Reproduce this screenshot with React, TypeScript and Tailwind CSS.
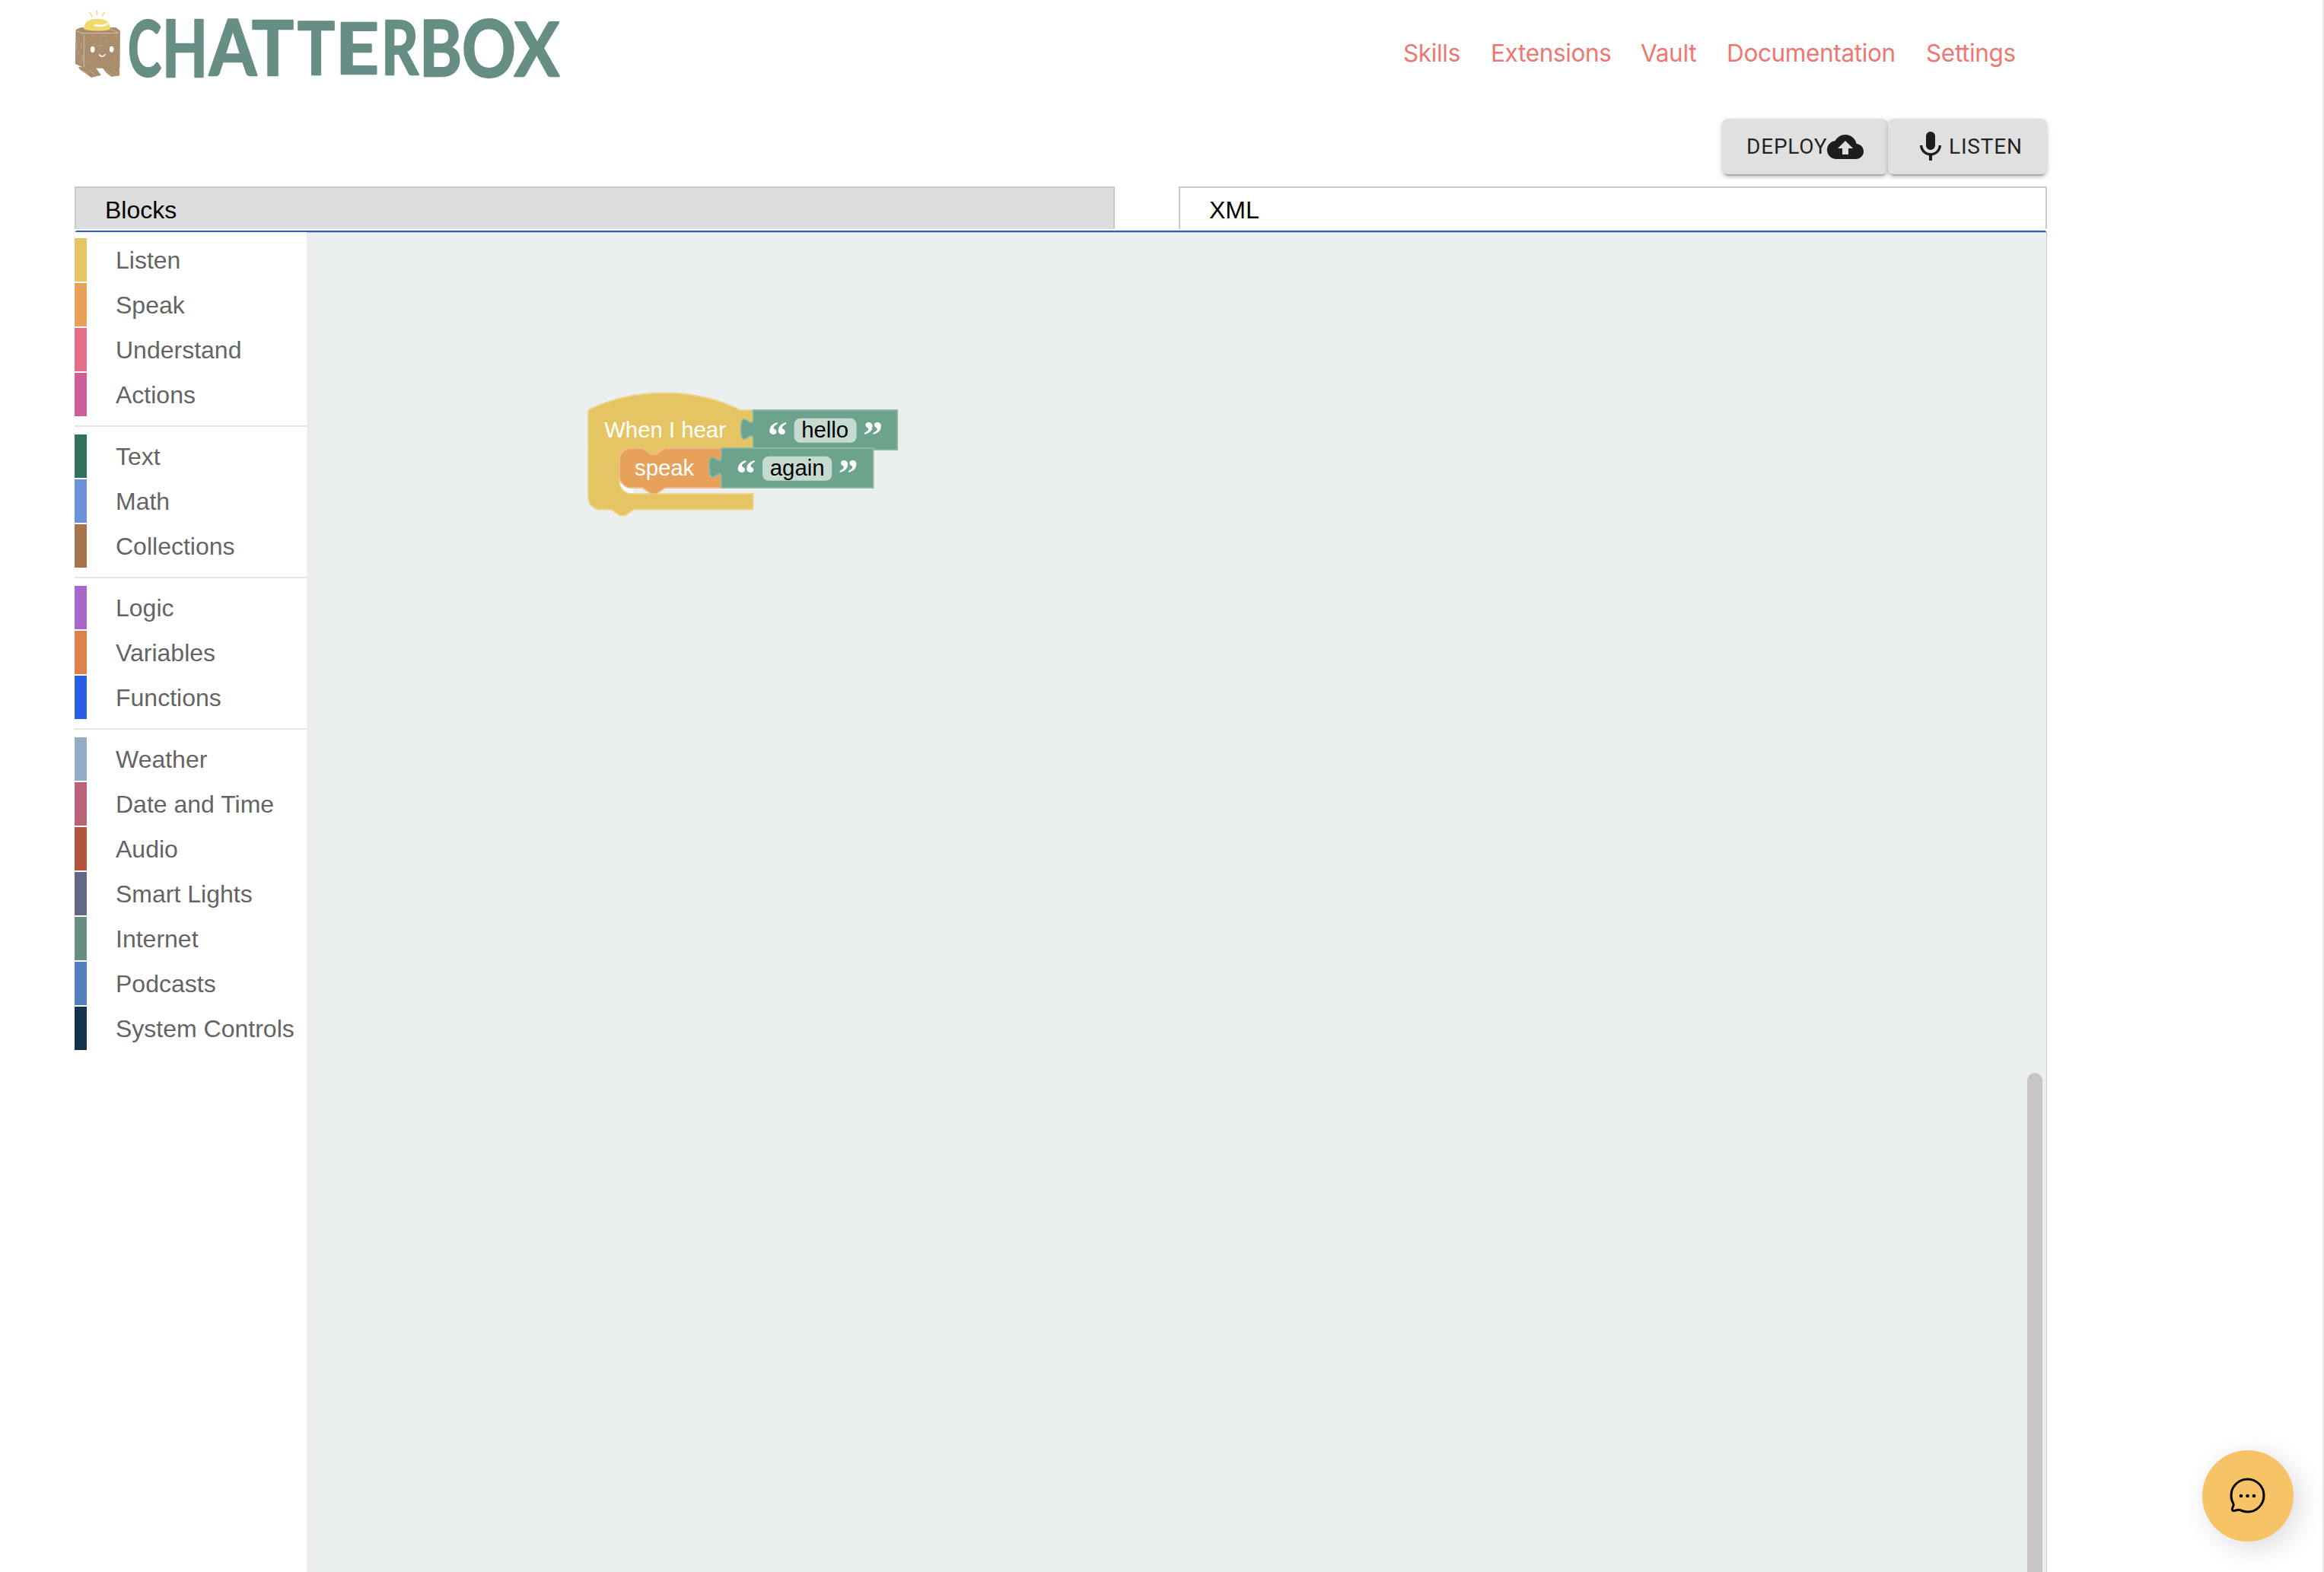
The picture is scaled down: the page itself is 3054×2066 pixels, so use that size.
import React from "react";

type Category = { name: string; bar: string };

const groups: Category[][] = [
  [
    { name: "Listen", bar: "bg-[#e5c563]" },
    { name: "Speak", bar: "bg-[#e8a15b]" },
    { name: "Understand", bar: "bg-[#e37088]" },
    { name: "Actions", bar: "bg-[#cd5c99]" },
  ],
  [
    { name: "Text", bar: "bg-[#31725f]" },
    { name: "Math", bar: "bg-[#6b92d6]" },
    { name: "Collections", bar: "bg-[#a5744c]" },
  ],
  [
    { name: "Logic", bar: "bg-[#a866c8]" },
    { name: "Variables", bar: "bg-[#de7f4d]" },
    { name: "Functions", bar: "bg-[#2b5ce5]" },
  ],
  [
    { name: "Weather", bar: "bg-[#92adc7]" },
    { name: "Date and Time", bar: "bg-[#b86378]" },
    { name: "Audio", bar: "bg-[#b3543b]" },
    { name: "Smart Lights", bar: "bg-[#626786]" },
    { name: "Internet", bar: "bg-[#678e84]" },
    { name: "Podcasts", bar: "bg-[#5081bc]" },
    { name: "System Controls", bar: "bg-[#14324e]" },
  ],
];

const links = [
  { name: "Skills", w: "w-[115px]" },
  { name: "Extensions", w: "w-[197px]" },
  { name: "Vault", w: "w-[113px]" },
  { name: "Documentation", w: "w-[262px]" },
  { name: "Settings", w: "w-[122px]" },
];

// Wordmark letters: left edge, baseline, advance and size of each
const letters = [
  { ch: "C", x: 168, y: 100, w: 44, size: 101 },
  { ch: "H", x: 213, y: 101, w: 60, size: 104 },
  { ch: "A", x: 275, y: 99, w: 62, size: 101 },
  { ch: "T", x: 331, y: 99, w: 55, size: 100 },
  { ch: "T", x: 391, y: 98, w: 49, size: 96 },
  { ch: "E", x: 441, y: 96.5, w: 57, size: 92 },
  { ch: "R", x: 501, y: 98, w: 49, size: 98 },
  { ch: "B", x: 551, y: 100, w: 56, size: 101 },
  { ch: "O", x: 607, y: 101, w: 71, size: 104 },
  { ch: "X", x: 676, y: 100, w: 59, size: 98 },
];

function Mascot() {
  return (
    <>
      <path d="M60 118l18-8 140 0 14 12-1 145-136 1-37-17z" fill="#a98d6c" stroke="#a98d6c" strokeWidth="3" strokeLinejoin="round" />
      <path d="M70 264l66 2 22 30-38 9-20-14-26-18zM162 264l68 2 1 32-32 4-22-18z" fill="#a98d6c" stroke="#a98d6c" strokeWidth="1" />
      <path
        d="M80 131h146M91 136v128M64 122l22 10M198 116l26 13"
        stroke="#d3c4af"
        strokeWidth="3"
        fill="none"
      />
      <path
        d="M70 150l5 10M66 200l7 18M79 168l2 26M71 236l10 12M65 176l4 8M84 214l1 26M61 156v44M120 140l12 2M150 160l10-3M168 142l14 2M128 178l8-6M180 168l8-4M114 152l5 4M214 142l7 5M106 246l7 4M208 226l8 8M84 276l22 14M112 276l22 20M178 276l22 18M206 274l16 18M146 182l16-2"
        stroke="#c9b89f"
        strokeWidth="2"
        fill="none"
      />
      <ellipse cx="125" cy="195" rx="8.5" ry="12" fill="#fff" />
      <ellipse cx="200" cy="194" rx="8.5" ry="12" fill="#fff" />
      <path d="M152 216q10 14 22-1" stroke="#fff" strokeWidth="5" fill="none" strokeLinecap="round" />
      <path d="M90 114c4-24 14-34 34-38 20-3 42-2 56 6 10 8 13 20 15 34-30 8-80 8-105-2z" fill="#f0da6c" />
      <path d="M134 99c12 4 38 4 47-5" stroke="#fff" strokeWidth="8" fill="none" strokeLinecap="round" />
      <path d="M114 49l9 15M142 43l1 15M172 49l-8 13" stroke="#f0da6c" strokeWidth="5" fill="none" strokeLinecap="round" />
    </>
  );
}

function Logo() {
  return (
    <svg width="760" height="120" viewBox="0 0 760 120" className="block shrink-0">
      <g transform="translate(80 0) scale(0.33333)">
        <Mascot />
      </g>
      <text fill="#678e84" stroke="#678e84" strokeWidth="2.4" strokeLinejoin="round" className="font-[Lato,sans-serif] font-bold">
        {letters.map((l, i) => (
          <tspan key={i} x={l.x} y={l.y} fontSize={l.size} textLength={l.w} lengthAdjust="spacingAndGlyphs">
            {l.ch}
          </tspan>
        ))}
      </text>
    </svg>
  );
}

function ValueBlock({ x, y, w, pill, word, wordX }: { x: number; y: number; w: number; pill: number; word: string; wordX: number }) {
  return (
    <g transform={`translate(${x} ${y})`}>
      <path
        d={`M0,0 H${w} V26 H0 V20 c0,-10 -8,8 -8,-7.5 s8,2.5 8,-7.5 z`}
        fill="#6da38c"
        stroke="#8cb9a6"
        strokeWidth="0.9"
      />
      <text x="9.6" y="25.3" fontSize="26" fill="#fff" className="font-['Liberation_Serif',serif] font-bold">“</text>
      <rect x="27" y="5.4" width={pill} height="16" rx="4" fill="#c5dad1" />
      <text x={wordX} y="18.2" fontSize="14.67" fill="#000">{word}</text>
      <text x={27 + pill + 4.3} y="25.3" fontSize="26" fill="#fff" className="font-['Liberation_Serif',serif] font-bold">”</text>
    </g>
  );
}

function Blocks() {
  return (
    <svg
      width="440"
      height="180"
      viewBox="0 -15 220 90"
      className="absolute left-[370px] top-[203px] overflow-visible font-['Liberation_Sans',Arial,sans-serif]"
    >
      <path d="M20.3,44 V47 a8,8 0 0 0 8,8 H30 L29,51 L22,44 z" fill="#fff" />
      <path
        d="M0,0 c30,-15 70,-15 100,0 H108.3 V25 H50.5 l-6,4 -3,0 -6,-4 h-7 a8,8 0 0 0 -8,8 V47 a8,8 0 0 0 8,8 H108.3 V65.3 H30 l-6,4 -3,0 -6,-4 H8 a8,8 0 0 1 -8,-8 z"
        fill="#e5c563"
        stroke="#ecd586"
        strokeWidth="0.9"
      />
      <text x="10.6" y="18.2" fontSize="14.67" fill="#fff">When I hear</text>
      <g transform="translate(20.5 25)">
        <path
          d="M0,8 a8,8 0 0 1 8,-8 h7 l6,4 3,0 6,-4 H67 V26 H30 l-6,4 -3,0 -6,-4 H8 a8,8 0 0 1 -8,-8 z"
          fill="#e8a15b"
          stroke="#efb988"
          strokeWidth="0.9"
        />
        <text x="10" y="18.2" fontSize="14.67" fill="#fff">speak</text>
      </g>
      <ValueBlock x={108.3} y={0} w={94.8} pill={41} word="hello" wordX={31.8} />
      <ValueBlock x={87.5} y={25} w={99.8} pill={45.6} word="again" wordX={31.9} />
    </svg>
  );
}

const buttonClass =
  "flex h-[73px] items-center rounded-lg bg-[#e0e0e0] font-[Roboto,sans-serif] text-[28px] leading-none tracking-[0.8px] text-black/87 shadow-[0_6px_2px_-4px_rgba(0,0,0,0.2),0_4px_4px_0_rgba(0,0,0,0.14),0_2px_10px_0_rgba(0,0,0,0.12)]";

export default function App() {
  return (
    <div className="relative flex h-[2066px] w-[3054px] flex-col overflow-hidden border-r-2 border-[#e8e8e8] bg-white font-['Liberation_Sans',Arial,sans-serif] text-[32px]">
      <header className="flex h-[120px] w-[2690px] shrink-0 justify-between">
        <Logo />
        <nav className="mt-[47px] flex w-[846px] font-[Inter,sans-serif] text-[31.5px] leading-[46px] tracking-[-0.35px] text-[#ee7772]">
          {links.map((l) => (
            <a key={l.name} className={`${l.w} shrink-0 whitespace-nowrap`}>
              {l.name}
            </a>
          ))}
        </nav>
      </header>

      <div className="mt-9 flex w-[2690px] shrink-0 justify-end">
        <button className={`${buttonClass} w-[218px] pl-8`}>
          <span className="w-[106px] whitespace-nowrap">DEPLOY</span>
          <svg width="48" height="48" viewBox="0 0 24 24" fill="currentColor" className="shrink-0">
            <path d="M19.35 10.04C18.67 6.59 15.64 4 12 4 9.11 4 6.6 5.64 5.35 8.04 2.34 8.36 0 10.91 0 14c0 3.31 2.69 6 6 6h13c2.76 0 5-2.24 5-5 0-2.64-2.05-4.78-4.65-4.96zM14 13v4h-4v-4H7l5-5 5 5h-3z" />
          </svg>
        </button>
        <button className={`${buttonClass} w-[209px] pl-8`}>
          <svg width="48" height="48" viewBox="0 0 24 24" fill="currentColor" className="shrink-0">
            <path d="M12 14c1.66 0 2.99-1.34 2.99-3L15 5c0-1.66-1.34-3-3-3S9 3.34 9 5v6c0 1.66 1.34 3 3 3zm5.3-3c0 3-2.54 5.1-5.3 5.1S6.7 14 6.7 11H5c0 3.41 2.72 6.23 6 6.72V21h2v-3.28c3.28-.48 6-3.3 6-6.72h-1.7z" />
          </svg>
          <span>LISTEN</span>
        </button>
      </div>

      <div className="ml-[98px] mt-4 flex h-14 w-[2592px] shrink-0 justify-between leading-[58px] text-black">
        <div className="w-[1367px] border-x-2 border-t-2 border-[#c9c9c9] bg-[#ddd] pl-[38px]">Blocks</div>
        <div className="w-[1141px] border-x-2 border-t-2 border-[#c9c9c9] pl-[38px]">XML</div>
      </div>
      <div className="ml-[99px] mt-0.5 h-0.5 w-[2590px] shrink-0 rounded-t bg-[#2a5cc4]" />

      <main className="ml-[98px] flex w-[2592px] grow">
        <aside className="flex w-[305px] shrink-0 flex-col pt-2 text-[#646464]">
          {groups.map((g, gi) => (
            <div
              key={gi}
              className={gi === 0 ? "flex flex-col gap-0.5" : "mt-3 flex flex-col gap-0.5 border-t-2 border-[#e5e5e5] pt-2.5"}
            >
              {g.map((c) => (
                <div key={c.name} className="flex h-[57px] items-center whitespace-nowrap">
                  <span className={`${c.bar} mr-[38px] h-full w-4 shrink-0`} />
                  {c.name}
                </div>
              ))}
            </div>
          ))}
        </aside>
        <section className="relative grow border-r border-t border-[#c6c6c6] bg-[#ebeff0]">
          <Blocks />
          <div className="absolute bottom-0 right-[5px] top-[1104px] w-5 rounded-t-full bg-[#c6c6c6]" />
        </section>
      </main>

      <button className="absolute bottom-10 right-[38px] flex size-[120px] items-center justify-center rounded-full bg-[#f6c466] shadow-[8px_8px_36px_rgba(0,0,0,0.14)]">
        <svg width="48" height="48" viewBox="0 0 48 48" fill="none" stroke="#000" strokeWidth="3" strokeLinejoin="round">
          <path d="M4.9 34 C3 31 2 27.500 2 23.500 A21.500 21.500 0 1 1 23.500 45 C19 45 16.500 44 13 42.400 C10.500 41.600 8.500 43.500 5.500 43.500 C3.500 43.500 3 42 3.600 40 C4.500 37.500 6 36.500 4.900 34 Z" />
          <g fill="#000" stroke="none">
            <circle cx="15" cy="24" r="2.300" />
            <circle cx="23.500" cy="24" r="2.300" />
            <circle cx="32" cy="24" r="2.300" />
          </g>
        </svg>
      </button>
    </div>
  );
}
